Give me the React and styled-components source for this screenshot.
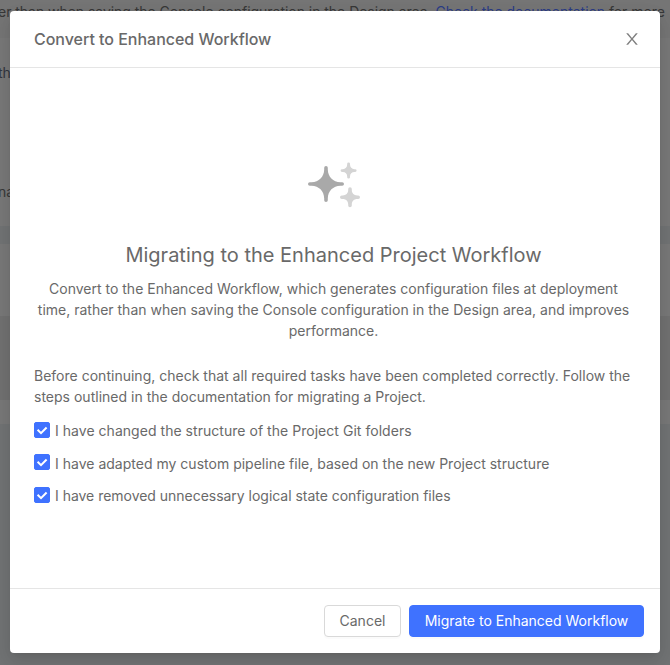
import React, { useState } from "react";
import styled, { createGlobalStyle } from "styled-components";

const GlobalStyle = createGlobalStyle`
  *, *::before, *::after { box-sizing: border-box; }
  body {
    margin: 0;
    overflow: hidden;
    font-family: Inter, "Liberation Sans", sans-serif;
    font-size: 14px;
    line-height: 21px;
    color: #696969;
  }
  h1, h2, p { margin: 0; font-weight: 400; }
`;

const Screen = styled.div`
  position: relative;
  width: 100%;
  height: 665px;
  overflow: hidden;
`;

const Page = styled.div`
  display: flex;
  flex-direction: column;
  height: 100%;
`;

const Band = styled.section`
  flex: none;
  height: ${(p) => p.$height}px;
  padding-top: ${(p) => p.$top || 0}px;
  background: ${(p) => p.$tone};
  white-space: nowrap;
`;

const PageLine = styled.p`
  margin-left: ${(p) => p.$shift || 0}px;
  margin-bottom: ${(p) => p.$gap || 0}px;
  color: ${(p) => p.$color || "#666"};
  letter-spacing: -0.035px;
`;

const PageLink = styled.a`
  color: #4f70f5;
  text-decoration: none;
`;

const Mask = styled.div`
  position: absolute;
  inset: 0;
  padding: 11px 10px 12px;
  display: flex;
  background: rgba(0, 0, 0, 0.45);
`;

const Dialog = styled.div`
  flex: 1;
  min-width: 0;
  display: flex;
  flex-direction: column;
  background: #fff;
  border-radius: 4px;
  box-shadow: 0 3px 6px -4px rgba(0, 0, 0, 0.12), 0 6px 16px rgba(0, 0, 0, 0.08),
    0 9px 28px 8px rgba(0, 0, 0, 0.05);
`;

const Header = styled.header`
  height: 57px;
  padding: 0 20px 0 24px;
  display: flex;
  align-items: center;
  justify-content: space-between;
  border-bottom: 1px solid #e5e5e5;
`;

const Title = styled.h1`
  font-size: 16px;
  line-height: 24px;
  font-weight: 500;
  letter-spacing: -0.02px;
`;

const CloseButton = styled.button`
  display: flex;
  padding: 0;
  border: 0;
  background: none;
  color: #808080;
`;

const Content = styled.main`
  flex: 1;
  padding: 88px 24px 0;
  display: flex;
  flex-direction: column;
`;

const Hero = styled.div`
  display: flex;
  flex-direction: column;
  align-items: center;
  text-align: center;
  padding-right: 3px;
`;

const Heading = styled.h2`
  margin-top: 29px;
  font-size: 20px;
  line-height: 28px;
  white-space: nowrap;
`;

const Description = styled.p`
  margin-top: 9px;
`;

const Instructions = styled.p`
  margin-top: 24px;
  letter-spacing: 0.01px;
`;

const Checklist = styled.div`
  margin-top: 13px;
  display: flex;
  flex-direction: column;
  gap: 11.5px;
`;

const CheckItem = styled.label`
  display: flex;
  gap: 5px;
  height: 21px;
  letter-spacing: ${(p) => p.$spacing}px;
`;

const CheckBox = styled.span`
  width: 16px;
  height: 16px;
  margin-top: ${(p) => p.$top}px;
  border-radius: 2px;
  background: ${(p) => (p.$checked ? "#3f72ff" : "#fff")};
  border: 1px solid ${(p) => (p.$checked ? "#3f72ff" : "#d9d9d9")};
  display: flex;
  align-items: center;
  justify-content: center;
`;

const HiddenInput = styled.input`
  appearance: none;
  position: absolute;
  margin: 0;
`;

const Footer = styled.footer`
  height: 65px;
  padding: 0 16px;
  display: flex;
  align-items: center;
  justify-content: flex-end;
  gap: 8px;
  border-top: 1px solid #e5e5e5;
`;

const Button = styled.button`
  height: 32px;
  width: ${(p) => p.$width}px;
  padding: 0 0 2px;
  border-radius: 4px;
  border: 1px solid ${(p) => (p.$primary ? "#3f72ff" : "#d9d9d9")};
  background: ${(p) => (p.$primary ? "#3f72ff" : "#fff")};
  color: ${(p) => (p.$primary ? "#fff" : "#696969")};
  box-shadow: 0 2px 0 rgba(0, 0, 0, 0.016);
  font: inherit;
  white-space: nowrap;
`;

const CloseIcon = () => (
  <svg width="16" height="16" viewBox="64 64 896 896" fill="currentColor">
    <path d="M563.8 512l262.5-312.9c4.4-5.2.7-13.1-6.1-13.1h-79.8c-4.7 0-9.2 2.1-12.3 5.7L511.6 449.8 295.1 191.7c-3-3.6-7.5-5.7-12.3-5.7H203c-6.8 0-10.5 7.9-6.1 13.1L459.4 512 196.9 824.9A7.95 7.95 0 0 0 203 838h79.8c4.7 0 9.2-2.1 12.3-5.7l216.5-258.1 216.5 258.1c3 3.6 7.5 5.7 12.3 5.7h79.8c6.8 0 10.5-7.9 6.1-13.1L563.8 512z" />
  </svg>
);

const STAR =
  "M-1.8-16.2a1.8 1.8 0 0 1 3.6 0v1.7C2-7 7-2 14.5-1.8h1.7a1.8 1.8 0 0 1 0 3.6h-1.7C7 2 2 7 1.8 14.5v1.7a1.8 1.8 0 0 1-3.6 0v-1.7C-2 7-7 2-14.5 1.8h-1.7a1.8 1.8 0 0 1 0-3.6h1.7C-7-2-2-7-1.8-14.5Z";
const SMALL_STAR =
  "M-1.8-8.2a1.8 1.8 0 0 1 3.6 0v1C1.8-4 4-1.8 7.2-1.8h1a1.8 1.8 0 0 1 0 3.6h-1C4 1.8 1.8 4 1.8 7.2v1a1.8 1.8 0 0 1-3.6 0v-1C-1.8 4-4 1.8-7.2 1.8h-1a1.8 1.8 0 0 1 0-3.6h1C-4-1.8-1.8-4-1.8-7.2Z";

const SparkleIcon = () => (
  <svg width="54" height="56" viewBox="0 0 54 56">
    <path d={STAR} transform="translate(19 28)" fill="#a9a9a9" />
    <path d={SMALL_STAR} transform="translate(41.6 14.6) scale(.8)" fill="#d4d4d4" />
    <path d={SMALL_STAR} transform="translate(43 41.2)" fill="#d4d4d4" />
  </svg>
);

const CheckIcon = () => (
  <svg width="14" height="14" viewBox="0 0 14 14" fill="none" stroke="#fff" strokeWidth="2">
    <path d="M2.6 6.8 6 10.1 11.6 4.5" />
  </svg>
);

const TASKS = [
  { text: "I have changed the structure of the Project Git folders", top: 2, spacing: 0.035 },
  {
    text: "I have adapted my custom pipeline file, based on the new Project structure",
    top: 1,
    spacing: 0.01,
  },
  {
    text: "I have removed unnecessary logical state configuration files",
    top: 2,
    spacing: -0.025,
  },
];

export default function App() {
  const [checked, setChecked] = useState(TASKS.map(() => true));
  const toggle = (index) => setChecked((all) => all.map((v, i) => (i === index ? !v : v)));

  return (
    <Screen>
      <GlobalStyle />
      <Page>
        <Band $height={38} $top={1} $tone="#d8d8d8">
          <PageLine $shift={-2}>
            er than when saving the Console configuration in the Design area.{" "}
            <PageLink>Check the documentation</PageLink> for more
          </PageLine>
        </Band>
        <Band $height={188} $top={24} $tone="#dcdcdc">
          <PageLine $shift={-2} $gap={98} $color="#5c6475">th</PageLine>
          <PageLine $shift={-2}>na</PageLine>
        </Band>
        <Band $height={18} $tone="#d0d3d6" />
        <Band $height={72} $tone="#dcdcdc" />
        <Band $height={84} $tone="#d0d0d0" />
        <Band $height={24} $tone="#dcdcdc" />
        <Band $height={241} $tone="#d0d3d6" />
      </Page>
      <Mask>
        <Dialog role="dialog" aria-modal="true">
          <Header>
            <Title>Convert to Enhanced Workflow</Title>
            <CloseButton aria-label="Close">
              <CloseIcon />
            </CloseButton>
          </Header>
          <Content>
            <Hero>
              <SparkleIcon />
              <Heading>Migrating to the Enhanced Project Workflow</Heading>
              <Description>
                Convert to the Enhanced Workflow, which generates configuration files at deployment
                time, rather than when saving the Console configuration in the Design area, and
                improves performance.
              </Description>
            </Hero>
            <Instructions>
              Before continuing, check that all required tasks have been completed correctly. Follow
              the steps outlined in the documentation for migrating a Project.
            </Instructions>
            <Checklist>
              {TASKS.map((task, i) => (
                <CheckItem key={task.text} $spacing={task.spacing}>
                  <HiddenInput type="checkbox" checked={checked[i]} onChange={() => toggle(i)} />
                  <CheckBox $checked={checked[i]} $top={task.top}>
                    {checked[i] && <CheckIcon />}
                  </CheckBox>
                  {task.text}
                </CheckItem>
              ))}
            </Checklist>
          </Content>
          <Footer>
            <Button $width={77}>Cancel</Button>
            <Button $primary $width={235}>Migrate to Enhanced Workflow</Button>
          </Footer>
        </Dialog>
      </Mask>
    </Screen>
  );
}
